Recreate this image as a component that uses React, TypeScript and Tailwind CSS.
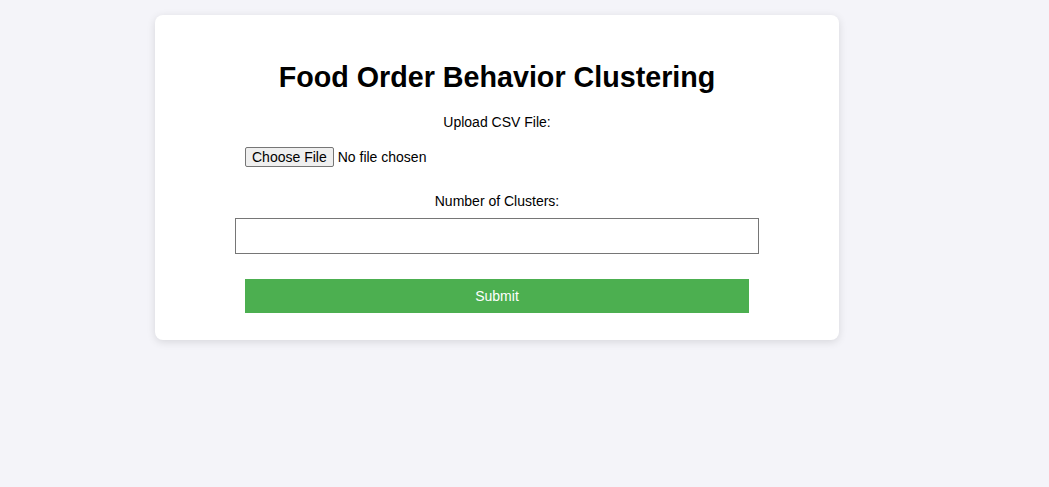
import React from 'react';

export default function App() {
  return (
    <div className="min-h-[487px] bg-[#f4f4f9] pt-[15px] font-['Liberation_Sans',Arial,sans-serif] text-black">
      <div className="ml-[155px] w-[684px] rounded-[8px] bg-white px-[80px] pb-[27px] pt-[40px] shadow-[0_2px_8px_rgba(0,0,0,0.12)]">
        <h1 className="text-center text-[28.7px] font-bold leading-[44px]">Food Order Behavior Clustering</h1>
        <form className="mt-[15px] flex flex-col">
          <label className="text-center text-[14px] leading-[16px]">Upload CSV File:</label>
          <div className="mx-[10px] mt-[17px] flex h-[20px] items-center">
            <input type="file" className="h-[20px] text-[14px] leading-[20px] font-['Liberation_Sans',Arial,sans-serif] file:mr-[4px] file:h-[20px] file:rounded-[2px] file:border file:border-[#767676] file:bg-[#efefef] file:px-[6px] file:py-0 file:text-[14px] file:leading-[18px] file:text-black" />
          </div>
          <label className="mt-[26px] text-center text-[14px] leading-[16px]">Number of Clusters:</label>
          <input type="number" className="mt-[9px] h-[36px] w-full border border-[#767676] px-[10px] text-[14px] outline-none" />
          <button type="button" className="mx-[10px] mt-[25px] h-[34px] bg-[#4caf50] text-[14px] text-white">Submit</button>
        </form>
      </div>
    </div>
  );
}
